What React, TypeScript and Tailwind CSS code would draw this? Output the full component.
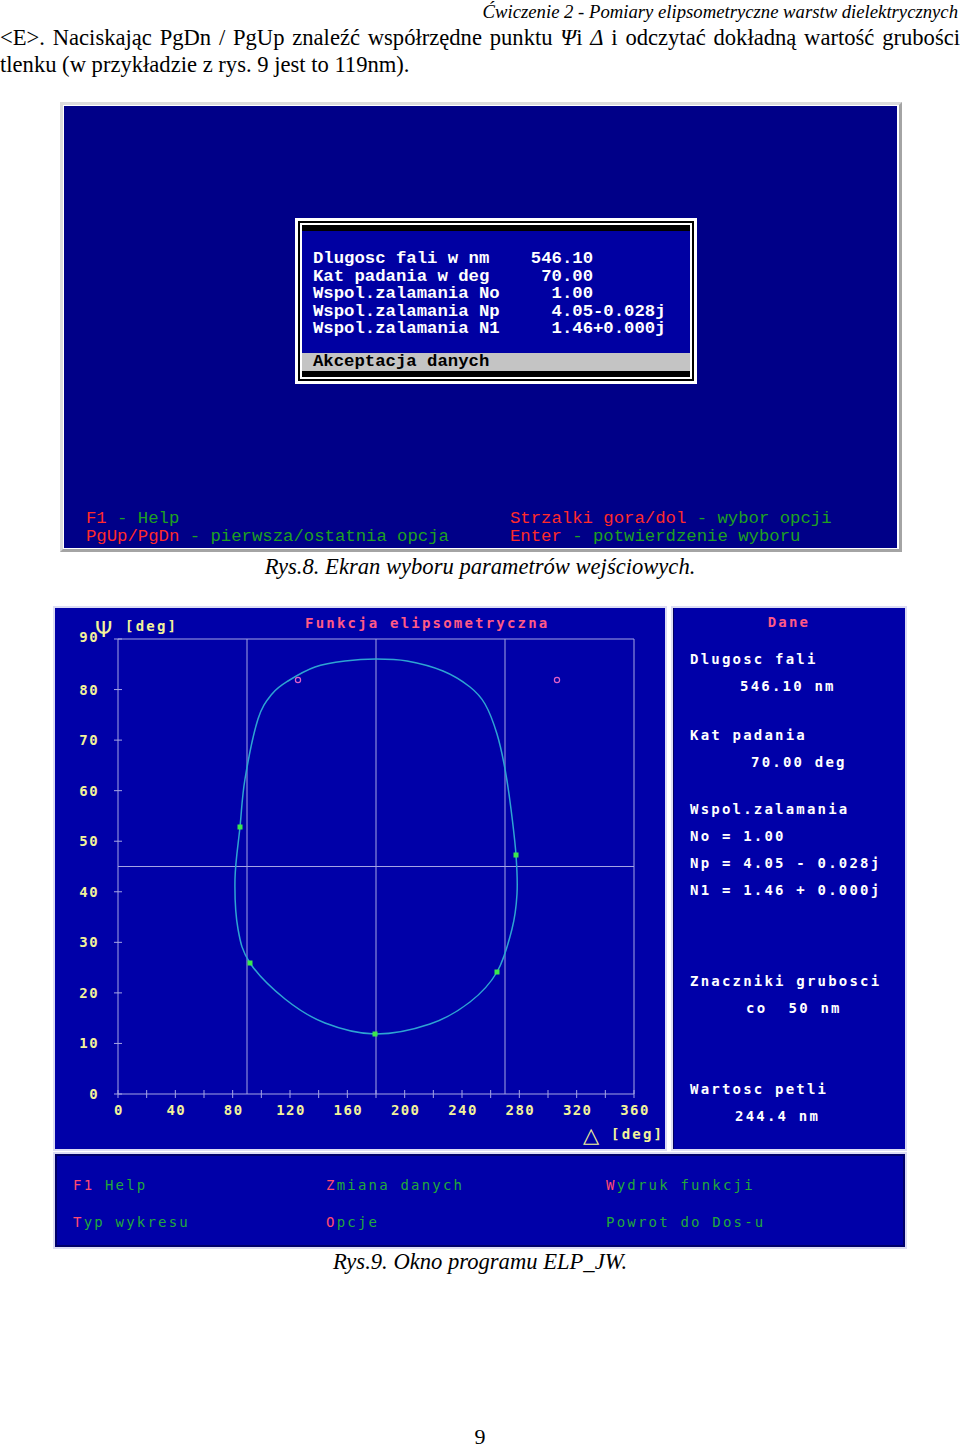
import React from 'react';

const DIALOG_LINES = [
  'Dlugosc fali w nm    546.10',
  'Kat padania w deg     70.00',
  'Wspol.zalamania No     1.00',
  'Wspol.zalamania Np     4.05-0.028j',
  'Wspol.zalamania N1     1.46+0.000j',
];

// curve traced in page coordinates, shifted into the chart panel below
const CURVE: [number, number][] = [
  [376, 660], [407, 662], [443, 672], [470, 688], [485, 705], [497, 735], [505, 770], [511, 810],
  [516, 856], [517, 895], [512, 930], [497, 973], [470, 1003], [430, 1025], [375, 1035], [325, 1024],
  [285, 1000], [250, 964], [238, 930], [235, 880], [240, 828], [245, 780], [258, 720], [272, 695],
  [288, 682], [315, 668], [345, 662],
];
const MARKS: [number, number][] = [[240, 828], [250, 964], [375, 1035], [497, 973], [516, 856]];
const RINGS: [number, number][] = [[298, 681], [557, 681]];

const OX = 55;
const OY = 609;
const X = (d: number) => 118 - OX + d * (516 / 360);
const Y = (p: number) => 1095 - OY - p * (455 / 90);

const smoothPath = (pts: [number, number][]) => {
  const n = pts.length;
  const q = pts.map(([x, y]) => [x - OX, y - OY]);
  let d = `M${q[0][0]},${q[0][1]}`;
  for (let i = 0; i < n; i++) {
    const p0 = q[(i - 1 + n) % n], p1 = q[i], p2 = q[(i + 1) % n], p3 = q[(i + 2) % n];
    const c1 = [p1[0] + (p2[0] - p0[0]) / 6, p1[1] + (p2[1] - p0[1]) / 6];
    const c2 = [p2[0] - (p3[0] - p1[0]) / 6, p2[1] - (p3[1] - p1[1]) / 6];
    d += ` C${c1[0].toFixed(1)},${c1[1].toFixed(1)} ${c2[0].toFixed(1)},${c2[1].toFixed(1)} ${p2[0]},${p2[1]}`;
  }
  return d + ' Z';
};

const dos = { fontFamily: 'DejaVu Sans Mono, monospace', fontWeight: 700, fontSize: 14, letterSpacing: 2.2 };

const Chart = () => {
  const grid = '#a4a4e4';
  const yellow = '#f2f29a';
  return (
    <svg viewBox="0 0 610 541" width={610} height={541} className="block">
      <text x={250} y={20} fill="#ff5a86" style={dos}>Funkcja elipsometryczna</text>
      <text x={40} y={29} fill={yellow} style={{ fontFamily: 'DejaVu Sans, sans-serif', fontSize: 22 }}>Ψ</text>
      <text x={70} y={23} fill={yellow} style={dos}>[deg]</text>

      <line x1={X(0)} y1={Y(90)} x2={X(360)} y2={Y(90)} stroke={grid} />
      <line x1={X(360)} y1={Y(90)} x2={X(360)} y2={Y(0)} stroke={grid} />
      <line x1={X(0)} y1={Y(90)} x2={X(0)} y2={Y(0)} stroke={grid} />
      <line x1={X(0)} y1={Y(0)} x2={X(360)} y2={Y(0)} stroke={grid} />
      {[90, 180, 270].map(d => (
        <line key={d} x1={X(d)} y1={Y(90)} x2={X(d)} y2={Y(0)} stroke={grid} />
      ))}
      <line x1={X(0)} y1={Y(45)} x2={X(360)} y2={Y(45)} stroke={grid} />

      {[90, 80, 70, 60, 50, 40, 30, 20, 10, 0].map(p => (
        <g key={p}>
          <line x1={X(0) - 4} y1={Y(p)} x2={X(0) + 4} y2={Y(p)} stroke={grid} />
          <text x={44} y={Y(p) + (p === 90 ? 3 : 5)} textAnchor="end" fill={yellow} style={{ ...dos, letterSpacing: 1.4 }}>{p}</text>
        </g>
      ))}
      {Array.from({ length: 19 }, (_, i) => i * 20).map(d => (
        <line key={d} x1={X(d)} y1={Y(0) - 4} x2={X(d)} y2={Y(0) + 4} stroke={grid} />
      ))}
      {Array.from({ length: 10 }, (_, i) => i * 40).map(d => (
        <text key={d} x={X(d) + 1} y={507} textAnchor="middle" fill={yellow} style={{ ...dos, letterSpacing: 1.4 }}>{d}</text>
      ))}
      <text x={528} y={534} fill={yellow} style={{ fontFamily: 'DejaVu Sans, sans-serif', fontSize: 21 }}>△</text>
      <text x={556} y={531} fill={yellow} style={dos}>[deg]</text>

      <path d={smoothPath(CURVE)} fill="none" stroke="#2ea4d2" strokeWidth={1.5} />
      {MARKS.map(([x, y], i) => (
        <rect key={i} x={x - OX - 2.5} y={y - OY - 2.5} width={5} height={5} fill="#3ce84c" />
      ))}
      {RINGS.map(([x, y], i) => (
        <circle key={i} cx={x - OX} cy={y - OY} r={2.6} fill="none" stroke="#e060c8" strokeWidth={1.2} />
      ))}
    </svg>
  );
};

const R = ({ children }: { children: React.ReactNode }) => <span className="text-[#ff4a72]">{children}</span>;

export default function App() {
  return (
    <div className="w-[960px] min-h-[1447px] bg-white text-black font-['Liberation_Serif',serif] relative">
      <div className="h-[24px] pt-[2px] text-right italic text-[18.7px] leading-[20px] pr-[2px]">
        Ćwiczenie 2 - Pomiary elipsometryczne warstw dielektrycznych
      </div>
      <p className="text-[22.6px] leading-[27px] text-justify">
        &lt;E&gt;. Naciskając PgDn / PgUp znaleźć współrzędne punktu <i>Ψ</i>i <i>Δ</i> i odczytać dokładną wartość grubości tlenku (w przykładzie z rys. 9 jest to 119nm).
      </p>

      {/* Rys. 8 */}
      <div className="ml-[60px] mt-[24px] w-[842px] border-[3px] border-t-[#dcdcdc] border-l-[#dcdcdc] border-b-[#a4a4a4] border-r-[#a4a4a4] bg-white p-[1px] pr-[2px]">
        <div className="h-[442px] bg-[#000088] flex flex-col font-['Liberation_Mono',monospace]">
          <div className="ml-[231px] mt-[112px] w-[402px] h-[166px] border-[3px] border-white bg-black p-[2px]">
            <div className="h-full border-2 border-white bg-black flex flex-col">
              <div className="h-[6px]" />
              <div className="h-[122px] bg-[#0000a2] pt-[19px] pl-[11px]">
                {DIALOG_LINES.map(l => (
                  <div key={l} className="whitespace-pre text-white font-bold text-[17.3px] leading-[17.5px]">{l}</div>
                ))}
              </div>
              <div className="h-[18px] bg-[#c4c4c4] pl-[11px] text-black font-bold text-[17.3px] leading-[18px]">Akceptacja danych</div>
            </div>
          </div>
          <div className="mt-[126px] pl-[22px] grid grid-cols-[424px_1fr] text-[17.3px] leading-[18px] whitespace-pre text-[#1fa01f]">
            <div><span className="text-[#ff2a2a]">F1</span> - Help</div>
            <div><span className="text-[#ff2a2a]">Strzalki gora/dol</span> - wybor opcji</div>
            <div><span className="text-[#ff2a2a]">PgUp/PgDn</span> - pierwsza/ostatnia opcja</div>
            <div><span className="text-[#ff2a2a]">Enter</span> - potwierdzenie wyboru</div>
          </div>
        </div>
      </div>
      <div className="mt-[3px] text-center italic text-[22.6px] leading-[24px]">Rys.8. Ekran wyboru parametrów wejściowych.</div>

      {/* Rys. 9 */}
      <div className="ml-[53px] mt-[27px] w-[854px] flex flex-col gap-[1px] font-['DejaVu_Sans_Mono',monospace]">
        <div className="flex gap-[4px] h-[545px]">
          <div className="w-[614px] border-2 border-[#dcdcf4] bg-[#0000a8]">
            <Chart />
          </div>
          <div className="flex-1 border-2 border-[#dcdcf4] bg-[#0000a8] shadow-[inset_1px_0_0_#000060] pl-[17px] text-white font-bold text-[14px] leading-[14px] tracking-[2.2px] whitespace-pre">
            <div className="mt-[7px] text-center pr-[17px] text-[#ff5a86]">Dane</div>
            <div className="mt-[23px]">Dlugosc fali</div>
            <div className="mt-[13px] pl-[50px]">546.10 nm</div>
            <div className="mt-[35px]">Kat padania</div>
            <div className="mt-[13px] pl-[61px]">70.00 deg</div>
            <div className="mt-[33px]">Wspol.zalamania</div>
            <div className="mt-[13px]">No = 1.00</div>
            <div className="mt-[13px]">Np = 4.05 - 0.028j</div>
            <div className="mt-[13px]">N1 = 1.46 + 0.000j</div>
            <div className="mt-[77px]">Znaczniki grubosci</div>
            <div className="mt-[13px] pl-[56px]">co  50 nm</div>
            <div className="mt-[67px]">Wartosc petli</div>
            <div className="mt-[13px] pl-[45px]">244.4 nm</div>
          </div>
        </div>
        <div className="h-[97px] border-2 border-[#dcdcf4] bg-[#0000a8] shadow-[inset_0_0_0_2px_#00006a] pl-[18px] pt-[24px] grid grid-cols-[253px_280px_1fr] gap-y-[23px] content-start text-[14px] leading-[14px] tracking-[2.2px] text-[#22a83a] whitespace-pre">
          <div><R>F1</R> Help</div>
          <div><R>Z</R>miana danych</div>
          <div><R>W</R>ydruk funkcji</div>
          <div><R>T</R>yp wykresu</div>
          <div><R>O</R>pcje</div>
          <div>Powrot do Dos-u</div>
        </div>
      </div>
      <div className="mt-[1px] text-center italic text-[22.6px] leading-[24px]">Rys.9. Okno programu ELP_JW.</div>

      <div className="absolute left-0 right-0 top-[1426px] text-center text-[22px] leading-[22px]">9</div>
    </div>
  );
}
